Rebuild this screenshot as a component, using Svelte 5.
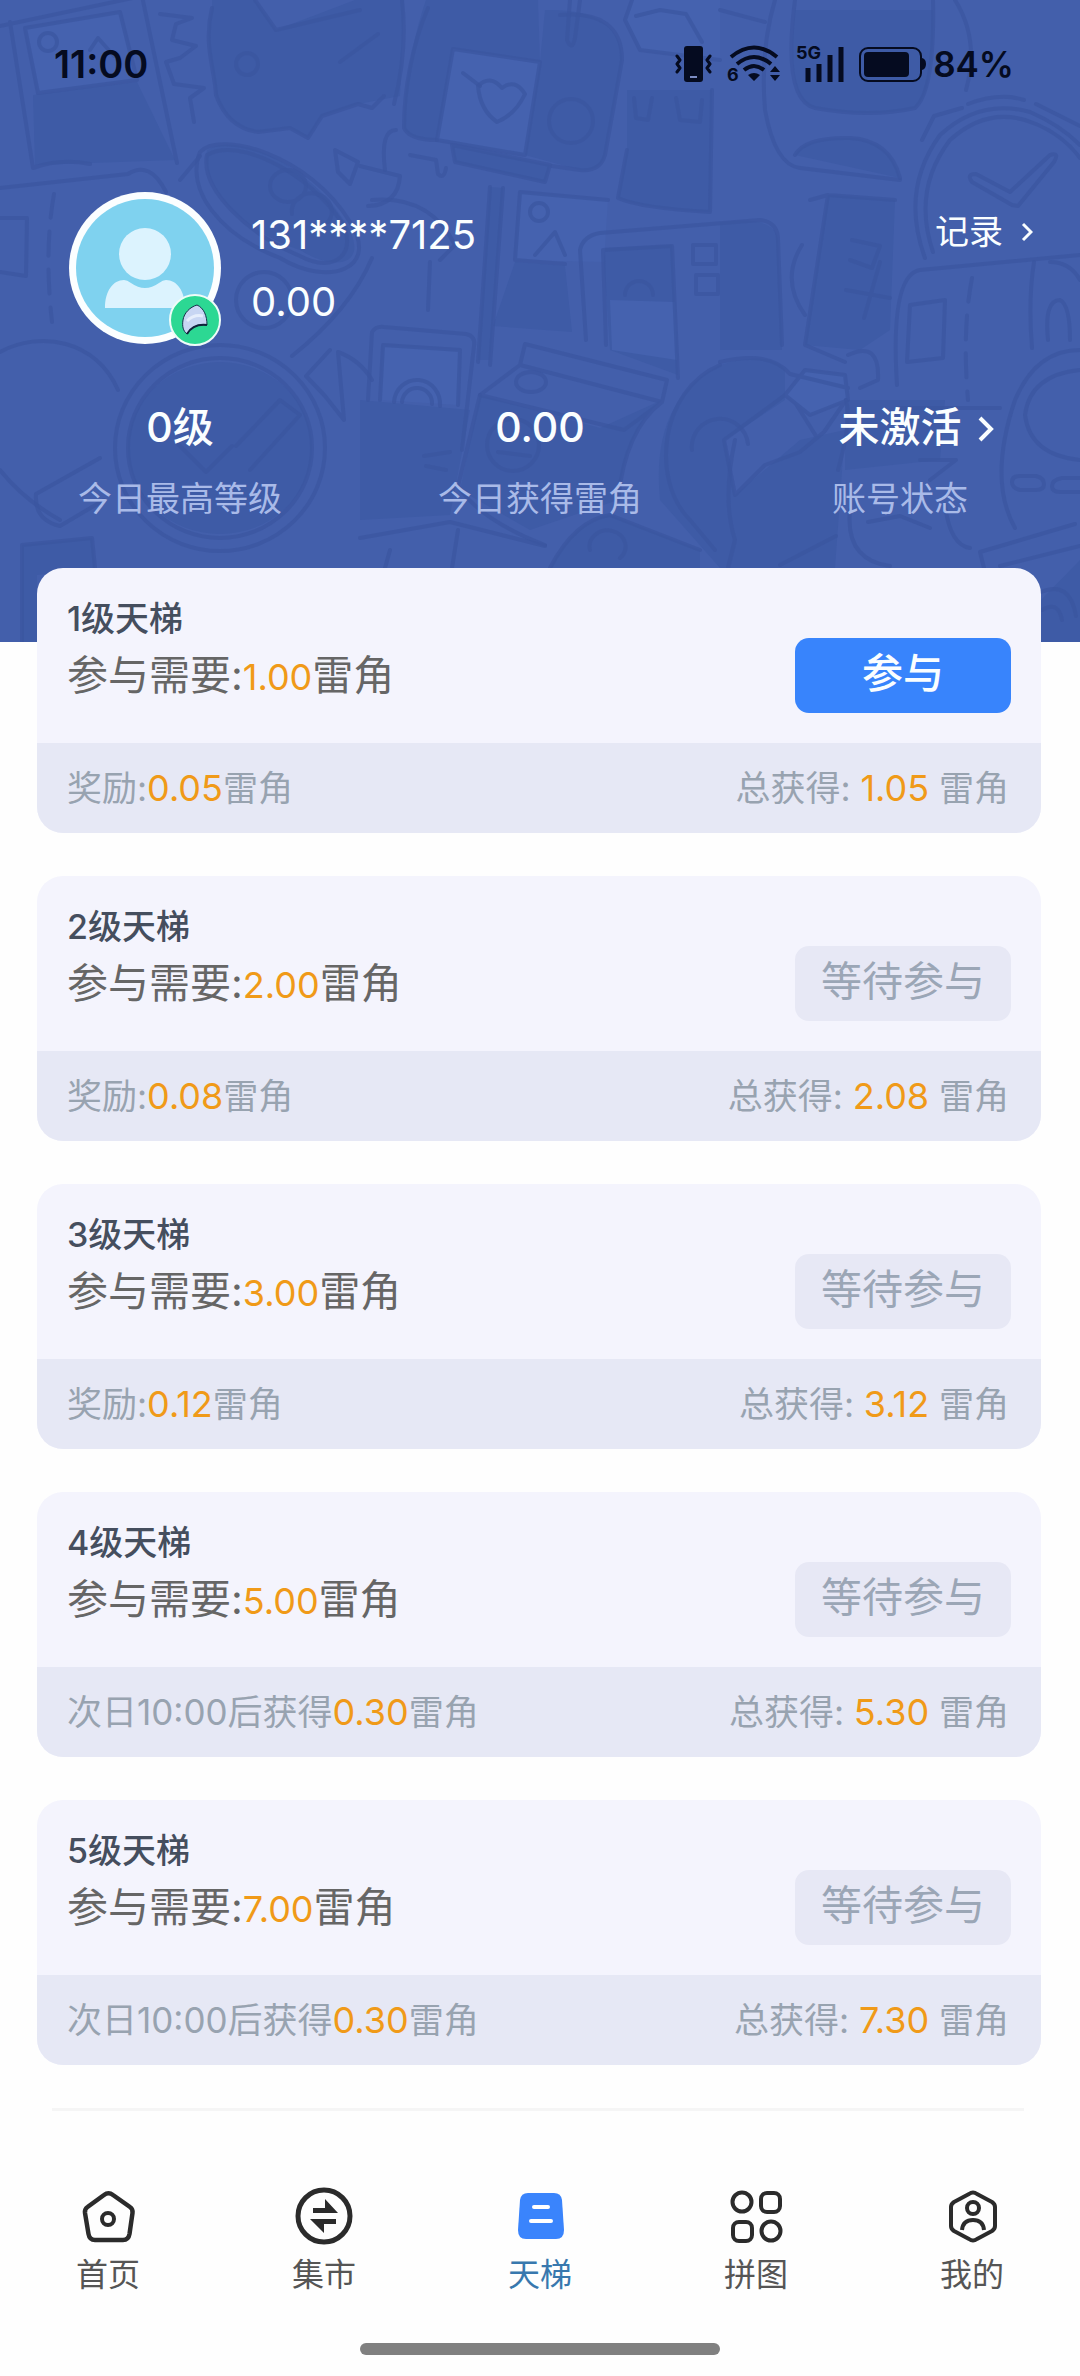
<script lang="ts">
  type Level = {
    level: number;
    cost: string;
    prefix: string;
    reward: string;
    total: string;
    open: boolean;
  };

  const stats = [
    { value: '0级', label: '今日最高等级', link: false },
    { value: '0.00', label: '今日获得雷角', link: false },
    { value: '未激活', label: '账号状态', link: true },
  ];

  const levels: Level[] = [
    { level: 1, cost: '1.00', prefix: '奖励:', reward: '0.05', total: '1.05', open: true },
    { level: 2, cost: '2.00', prefix: '奖励:', reward: '0.08', total: '2.08', open: false },
    { level: 3, cost: '3.00', prefix: '奖励:', reward: '0.12', total: '3.12', open: false },
    { level: 4, cost: '5.00', prefix: '次日10:00后获得', reward: '0.30', total: '5.30', open: false },
    { level: 5, cost: '7.00', prefix: '次日10:00后获得', reward: '0.30', total: '7.30', open: false },
  ];

  const tabs = [
    { id: 'home', label: '首页' },
    { id: 'market', label: '集市' },
    { id: 'ladder', label: '天梯' },
    { id: 'puzzle', label: '拼图' },
    { id: 'me', label: '我的' },
  ];

  let active = $state('ladder');

  // Header doodles: filled areas first, outlines on top
  const darkAreas = [
    'M33 95L137 82L175 160L35 165Z',
    'M212 8C203 45 215 70 216 95Q228 128 258 132L290 128L308 138L322 116L358 104L400 96L404 0H355L276 30L255 0H212Z',
    'M426 0C412 40 404 90 404 128Q410 140 437 140L453 49L540 62L538 0Z',
    'M540 62L545 10Q620 8 622 60L605 155Q600 172 580 170L525 155Z',
    'M207 150C240 130 310 170 340 215C375 262 340 275 300 250C250 235 200 190 207 150Z',
    'M452 145L550 165L545 182L455 162Z',
    'M627 150L618 198Q640 208 710 212L712 90H627Z',
    'M490 187L503 188L490 360H478Z',
    'M515 262L565 266L572 332L493 326Z',
    'M603 248L672 245L678 375L610 350Z',
    'M720 222Q775 215 778 240L782 350H720Z',
    'M795 10Q785 100 815 108Q870 118 915 108Q935 90 933 10Z',
    'M795 155Q805 137 850 138Q890 140 900 178Z',
    'M828 195L895 200L890 330L860 350L805 345Z',
    'M360 400L470 410L450 515L360 520Z',
    'M128 448a92 86 0 1 0 184 0a92 86 0 1 0 -184 0Z',
    'M720 365Q770 350 785 370L785 400L725 440L735 495L800 440L845 430L835 568H720L660 500Q650 400 720 365Z',
    'M480 395L600 428L662 400Q625 430 618 500L530 530L460 490Z',
    'M22 642V545L92 538L95 568L37 575V642Z',
    'M550 568Q575 520 610 515L700 550V568Z',
    'M845 400H945L940 460L845 470Z',
    'M1041 600L1080 560V642H1041Z',
  ];

  const lightAreas = [
    'M25 28L120 12L137 80L38 93Z',
    'M453 49L540 62L525 155L437 140Z',
    'M632 0L625 20L640 50L720 60V0Z',
    'M520 192L608 200L604 262L515 260Z',
    'M610 300L675 302L677 360L612 350Z',
    'M785 395L805 370L845 375L848 400L810 415Z',
    'M383 345L460 350L458 405L380 400Z',
  ];

  const lines = [
    'M0 26L142 -4L177 163M10 22L33 168Q60 158 90 164',
    'M25 28L120 12L137 80L38 93ZM90 50L98 38L114 56',
    'M39 42a9 9 0 1 0 18 0a9 9 0 1 0 -18 0',
    'M160 14L192 18L176 24L172 40L196 46L180 58L166 62L174 84L204 88L190 98L194 122',
    'M212 8C203 45 215 70 216 95Q228 128 258 132L290 128L308 138L322 116L358 104L372 108L384 96',
    'M236 64a11 11 0 1 0 22 0a11 11 0 1 0 -22 0M255 0L276 30L360 10M340 62L378 34',
    'M200 152C220 130 310 155 350 222C380 268 330 288 280 258C220 235 185 190 200 152Z',
    'M207 155C240 136 310 175 340 220C360 252 335 275 300 256C250 235 200 190 207 155Z',
    'M270 186a18 16 0 1 0 36 0a18 16 0 1 0 -36 0M292 214a20 18 0 1 1 36 8',
    'M236 300a28 28 0 1 0 56 0a28 28 0 1 0 -56 0M372 258Q350 310 292 356',
    'M335 150L358 162L350 184L338 172ZM360 166L400 176Q398 205 368 206',
    'M0 188L128 174Q150 160 166 192M0 218H27L26 276L0 272M180 180L200 156',
    'M0 352C40 330 96 340 118 390M0 470Q24 500 60 520',
    'M36 494L100 458M36 494Q34 520 60 526L104 500',
    'M115 448a105 103 0 1 0 210 0a105 103 0 1 0 -210 0',
    'M128 448a92 90 0 1 0 184 0a92 90 0 1 0 -184 0',
    'M178 444L206 472L232 446M250 470L300 415L280 400L236 446',
    'M22 642V545L92 538L95 568M330 350L306 376L325 396L344 420L338 352Q360 360 372 380',
    'M402 0Q408 50 394 104M428 8C412 45 404 90 404 128Q410 140 437 140',
    'M453 49L540 62L525 155L437 140ZM463 73L480 86',
    'M478 86Q490 74 502 88Q515 78 525 94Q515 115 497 122Q480 110 478 86Z',
    'M560 15Q622 10 622 60L605 155Q600 172 580 170L552 166M549 121a22 22 0 1 0 44 0a22 22 0 1 0 -44 0',
    'M452 145L550 165L545 182L455 162ZM570 0L567 40Q572 52 575 38L580 0',
    'M385 170Q380 130 396 130M410 155L436 160L438 174Q444 180 446 168',
    'M632 0L625 20L640 50L720 60M636 16L660 10L686 14L702 42',
    'M634 98L636 118L648 120L652 98M676 98L680 120L700 122L702 100M627 150L618 198Q640 208 710 212L712 90',
    'M490 187L478 362M503 188L490 365M372 200Q430 195 455 245L440 260M430 262L428 310',
    'M520 192L608 200M520 192L515 260L565 264M530 212a9 9 0 1 0 18 0a9 9 0 1 0 -18 0M535 255L555 232L565 255',
    'M586 340L580 250Q583 236 600 233L760 220Q778 222 778 240L782 345',
    'M606 345L603 250L672 246L678 378M625 295a14 14 0 0 1 28 0M693 245H716V264H693ZM696 275H718V294H696Z',
    'M368 400L372 332Q376 326 384 327L466 334Q476 336 474 346L462 450M380 400L383 345L460 350L458 405',
    'M394 402a23 24 0 1 1 46 4M402 402a14 14 0 1 1 30 2',
    'M520 365L525 344L667 380L662 402M520 365L662 402M520 365L480 395L624 430L662 402Q625 430 618 500',
    'M516 382a15 10 0 1 0 30 0a15 10 0 1 0 -30 0M480 395L458 486Q480 520 545 545',
    'M487 445a26 26 0 1 0 52 0a26 26 0 1 0 -52 0M498 452L530 456M424 456L450 452M426 466L446 470',
    'M720 365C660 390 650 480 690 520L715 550M692 450a28 28 0 0 1 56 -6',
    'M360 538L450 522L545 546M390 550L385 568M458 530L452 568M550 568Q575 520 610 515L700 550M590 550a18 16 0 1 1 30 8',
    'M775 0Q760 50 765 110Q775 165 800 168L900 180M795 0Q782 100 815 108Q870 118 915 108Q935 90 933 0',
    'M795 155Q805 137 850 138Q890 140 900 178M955 0Q980 40 966 90M720 10L765 22',
    'M925 258Q900 190 940 135Q980 98 1030 112Q1060 125 1080 145M933 252Q912 190 950 140Q990 104 1036 124Q1064 136 1080 158',
    'M1012 205L972 182Q966 174 976 174L1010 192L1050 155Q1060 152 1054 162L1018 206Z',
    'M922 140L934 116L962 108M968 104Q1000 92 1024 100M1036 104L1080 126',
    'M828 195L805 345L845 362M810 200L828 195L895 200M852 240L880 246L872 268L850 260M846 290L890 298M880 262L864 318',
    'M802 245Q780 280 805 315M848 355Q880 340 878 380L860 388',
    'M897 385Q890 275 920 270L1080 255M910 305L945 300L943 358L907 362Z',
    'M1034 262Q1028 300 1032 348M1050 262Q1070 262 1080 280M1048 340Q1044 300 1060 300Q1070 305 1070 340',
    'M720 362Q770 350 790 374L848 388M785 395L805 370L845 375L848 400L810 415L785 395L724 440L735 495L765 465L800 452L824 432L846 400M796 404L816 436',
    'M1080 350Q1036 350 1015 400Q988 480 1015 528M1080 370Q1030 375 1025 415Q1030 455 1080 460',
    'M1020 476h16q8 2 8 8t-8 6h-16q-8 -2 -8 -8t8 -6ZM1080 478h-18q-10 2 -10 8t8 6h20',
    'M838 470Q852 420 846 400M920 460H956L930 480M850 510Q845 560 890 566M945 505Q950 545 970 548M868 522L900 516L930 528',
    'M984 568L980 552L1075 524M1080 546L1000 566M1041 592Q1070 580 1076 616M1042 610Q1058 600 1062 620M900 408H1000',
    'M735 440Q722 500 735 540L728 568M780 565L836 536',
  ];
</script>

<div class="page">
  <header class="hero">
    <svg class="doodles" viewBox="0 0 1080 642" preserveAspectRatio="xMidYMid slice" aria-hidden="true">
      {#each darkAreas as d}<path class="dark" {d} />{/each}
      {#each lightAreas as d}<path class="light" {d} />{/each}
      {#each lines as d}<path class="line" {d} />{/each}
      <path class="line dashed" d="M54 194Q44 250 52 322M972 278Q962 330 968 400" />
    </svg>

    <div class="status-bar">
      <span class="clock">11:00</span>
      <div class="status-icons">
        <svg width="37" height="36" viewBox="0 0 37 36" aria-hidden="true">
          <rect x="9" y="0" width="19" height="36" rx="3" fill="currentColor" />
          <path d="M15 31h7" stroke="#7c8cc4" stroke-width="2" />
          <path d="M2 10l3 4-3 4 3 4-3 4M35 10l-3 4 3 4-3 4 3 4" fill="none" stroke="currentColor" stroke-width="3" stroke-linejoin="round" stroke-linecap="round" />
        </svg>
        <svg width="54" height="50" viewBox="0 -6 54 50" aria-hidden="true">
          <g fill="none" stroke="currentColor" stroke-width="4">
            <path d="M4 12Q27-7 50 12" />
            <path d="M10 19Q27 5 44 19" />
            <path d="M17 25Q27 17 37 25" />
          </g>
          <path d="M21 30Q27 26 33 30L27 36ZM43 27l5-6 5 6ZM43 30h10l-5 6Z" fill="currentColor" />
          <text x="0" y="36" font-size="18" font-weight="700">6</text>
        </svg>
        <svg width="48" height="50" viewBox="0 -6 48 50" aria-hidden="true">
          <text x="0" y="14" font-size="18" font-weight="700">5G</text>
          <path d="M12 37V23M23 37V19M34 37V10M45 37V2" stroke="currentColor" stroke-width="5" />
        </svg>
        <div class="battery">
          <svg width="68" height="35" viewBox="0 0 68 35" aria-hidden="true">
            <rect x="1" y="1" width="61" height="33" rx="8" fill="none" stroke="currentColor" stroke-width="2" />
            <rect x="5" y="5" width="45" height="25" rx="4" fill="currentColor" />
            <path d="M63 11q4 1 4 6t-4 6Z" fill="currentColor" />
          </svg>
          <span>84%</span>
        </div>
      </div>
    </div>

    <div class="profile">
      <div class="avatar">
        <svg viewBox="0 0 152 152" role="img" aria-label="头像">
          <circle cx="76" cy="76" r="76" fill="#fbfeff" />
          <circle cx="76" cy="76" r="69" fill="#7fd2ef" />
          <circle cx="76" cy="62" r="26" fill="#dcf3fe" />
          <path d="M36 116C36 99 44 88 55 88Q58 88 62 91Q76 101 90 91Q94 88 97 88C108 88 116 99 116 116Z" fill="#dcf3fe" />
        </svg>
        <svg class="badge" viewBox="0 0 52 52" aria-hidden="true">
          <circle cx="26" cy="26" r="25" fill="#2cd893" stroke="#eefcf8" stroke-width="2" />
          <path d="M28 11C35 14 38 22 38 31C29 30 22 33 18 40C14 37 13 32 14 26C15 19 21 13 28 11Z" fill="#c8d6f3" stroke="#17304a" stroke-width="1" />
          <path d="M18 27Q25 20 34 22" fill="none" stroke="#e6eefc" stroke-width="3" />
          <path d="M18 40C22 33 29 30 38 31" fill="none" stroke="#10243a" stroke-width="2" />
        </svg>
      </div>
      <div class="account">
        <p>131****7125</p>
        <p>0.00</p>
      </div>
      <a class="records" href="#records">
        记录
        <svg width="12" height="20" viewBox="0 0 12 20" aria-hidden="true">
          <path d="M2 2l8 8-8 8" fill="none" stroke="currentColor" stroke-width="3" />
        </svg>
      </a>
    </div>

    <div class="stats">
      {#each stats as stat}
        <div class="stat">
          <div class="stat-value">
            {#if stat.link}
              <a href="#status">{stat.value}<svg class="more" width="16" height="26" viewBox="0 0 16 26" aria-hidden="true"><path d="M2 2l11 11-11 11" fill="none" stroke="currentColor" stroke-width="4" /></svg></a>
            {:else}
              {stat.value}
            {/if}
          </div>
          <div class="stat-label">{stat.label}</div>
        </div>
      {/each}
    </div>
  </header>

  <main class="levels">
    {#each levels as item}
      <article class="card">
        <div class="card-main">
          <div>
            <h2>{item.level}级天梯</h2>
            <p class="cost">参与需要:<em>{item.cost}</em>雷角</p>
          </div>
          <button class="join" disabled={!item.open}>{item.open ? '参与' : '等待参与'}</button>
        </div>
        <div class="card-foot">
          <span>{item.prefix}<em>{item.reward}</em>雷角</span>
          <span>总获得: <em>{item.total}</em> 雷角</span>
        </div>
      </article>
    {/each}
  </main>

  <nav class="tabs">
    {#each tabs as tab}
      <a href="#{tab.id}" class="tab" class:active={active === tab.id} onclick={() => (active = tab.id)}>
        <svg width="60" height="60" viewBox="0 0 60 60" fill="none" stroke="#2b2b2b" stroke-width="4" stroke-linejoin="round" aria-hidden="true">
          {#if tab.id === 'home'}
            <path stroke-width="4.5" d="M26 8Q30.500 4.500 35 8L52 20Q55 22 54.500 26L51.500 47Q50.500 53 45 53H17Q11.500 53 10.500 47L7 26Q6.500 22 9.500 20Z" />
            <circle cx="30" cy="32" r="6" />
          {:else if tab.id === 'market'}
            <circle cx="30" cy="29" r="26" stroke-width="5" />
            <path d="M19 21H31V12L44 26H19ZM16 32H42V37H30V46Z" fill="#2b2b2b" stroke="none" />
          {:else if tab.id === 'ladder'}
            <path d="M18 6H44Q51 6 52 13L54 43Q54 52 46 52H16Q8 52 8 43L10 13Q11 6 18 6Z" fill="#3a84fc" stroke="none" />
            <path d="M24 20H38M21 34H41" stroke="#fff" stroke-linecap="round" />
          {:else if tab.id === 'puzzle'}
            <circle cx="16" cy="15" r="9.500" />
            <rect x="35" y="6" width="19" height="19" rx="6" />
            <rect x="7" y="35" width="19" height="19" rx="6" />
            <circle cx="45" cy="44" r="9.500" />
          {:else}
            <path d="M27 7Q31 4 35 7L50 15Q53 17 53 20V39Q53 42 50 44L35 52Q31 55 27 52L12 44Q9 42 9 39V20Q9 17 12 15Z" />
            <circle cx="31" cy="21" r="6" />
            <path d="M20 43Q21 33 31 33T42 43" />
          {/if}
        </svg>
        <span>{tab.label}</span>
      </a>
    {/each}
  </nav>
  <div class="home-indicator"></div>
</div>

<style>
  :global(body) {
    margin: 0;
    background: #fefefe;
  }

  .page {
    font-family: Inter, "Noto Sans CJK SC", sans-serif;
    color: #666;
  }

  a {
    color: inherit;
    text-decoration: none;
  }

  p,
  h2 {
    margin: 0;
  }

  em {
    font-style: normal;
    line-height: 1;
    color: #f09a18;
  }

  /* Header */
  .hero {
    position: relative;
    padding-bottom: 107px;
    background: #435fab;
    color: #fafeff;
    overflow: hidden;
  }

  .doodles {
    position: absolute;
    inset: 0;
    width: 100%;
    height: 100%;
  }

  .dark { fill: #3e5ba6; }
  .light { fill: #4562af; }

  .line {
    fill: none;
    stroke: #3a559f;
    stroke-width: 4;
    stroke-linejoin: round;
    stroke-linecap: round;
    opacity: 0.7;
  }

  .dashed { stroke-dasharray: 24 14; }

  .status-bar,
  .profile,
  .stats {
    position: relative;
    display: flex;
  }

  .status-bar {
    align-items: center;
    justify-content: space-between;
    height: 128px;
    padding: 0 66px 0 54px;
    color: #050b20;
  }

  .clock {
    font-size: 38px;
    font-weight: 600;
  }

  .status-icons {
    display: flex;
    align-items: center;
    gap: 15px;
  }

  .status-icons text {
    fill: currentColor;
  }

  .battery {
    display: flex;
    align-items: center;
    gap: 6px;
    font-size: 35px;
    font-weight: 600;
  }

  .profile {
    align-items: center;
    margin-top: 64px;
    padding: 0 47px 0 69px;
  }

  .avatar {
    position: relative;
    width: 152px;
    height: 152px;
    margin-right: 30px;
  }

  .badge {
    position: absolute;
    right: 0;
    bottom: -2px;
    width: 52px;
    height: 52px;
  }

  .account {
    flex: 1;
    font-size: 40px;
    line-height: 67px;
  }

  .records {
    display: flex;
    align-items: center;
    align-self: flex-start;
    gap: 18px;
    font-size: 34px;
    line-height: 80px;
  }

  .stats {
    margin-top: 47px;
    text-align: center;
    line-height: 72px;
  }

  .stat { flex: 1; }

  .stat-value {
    font-size: 41px;
    font-weight: 500;
  }

  .more {
    margin: 0 -32px 0 16px;
  }

  .stat-label {
    font-size: 34px;
    color: #a9bae8;
  }

  /* Level cards */
  .levels {
    position: relative;
    display: grid;
    gap: 43px;
    margin-top: -74px;
    padding: 0 39px 43px 37px;
  }

  .card {
    border-radius: 26px;
    background: #f4f4fd;
    overflow: hidden;
  }

  .card-main {
    display: flex;
    justify-content: space-between;
    align-items: flex-end;
    padding: 32px 30px 30px;
  }

  .card h2 {
    font-size: 34px;
    font-weight: 500;
    line-height: 38px;
    color: #454e5e;
  }

  .cost {
    font-size: 41px;
    line-height: 75px;
  }

  .cost em { font-size: 36px; }

  .join {
    width: 216px;
    height: 75px;
    padding: 0 0 4px;
    border: 0;
    border-radius: 14px;
    background: #3884fc;
    color: #fafeff;
    font-family: inherit;
    font-size: 41px;
    font-weight: 500;
    line-height: 71px;
    cursor: pointer;
  }

  .join:disabled {
    background: #e7e8f5;
    color: #9ba6b6;
    font-weight: 400;
    cursor: default;
  }

  .card-foot {
    display: flex;
    justify-content: space-between;
    padding: 0 32px 0 30px;
    background: #e6e8f5;
    color: #98a3b0;
    font-size: 35px;
    line-height: 90px;
  }

  .card-foot em { font-size: 36px; }

  /* Tab bar */
  .tabs {
    position: relative;
    display: flex;
    padding-top: 79px;
  }

  .tabs::before {
    content: '';
    position: absolute;
    top: 0;
    left: 52px;
    right: 56px;
    height: 3px;
    background: #f5f5f5;
  }

  .tab {
    flex: 1;
    display: flex;
    flex-direction: column;
    align-items: center;
    gap: 6px;
    font-size: 32px;
    line-height: 44px;
    color: #555;
  }

  .tab.active { color: #3878ae; }

  .home-indicator {
    width: calc(100% / 3);
    height: 12px;
    margin: 46px auto 21px;
    border-radius: 6px;
    background: #808080;
  }
</style>
